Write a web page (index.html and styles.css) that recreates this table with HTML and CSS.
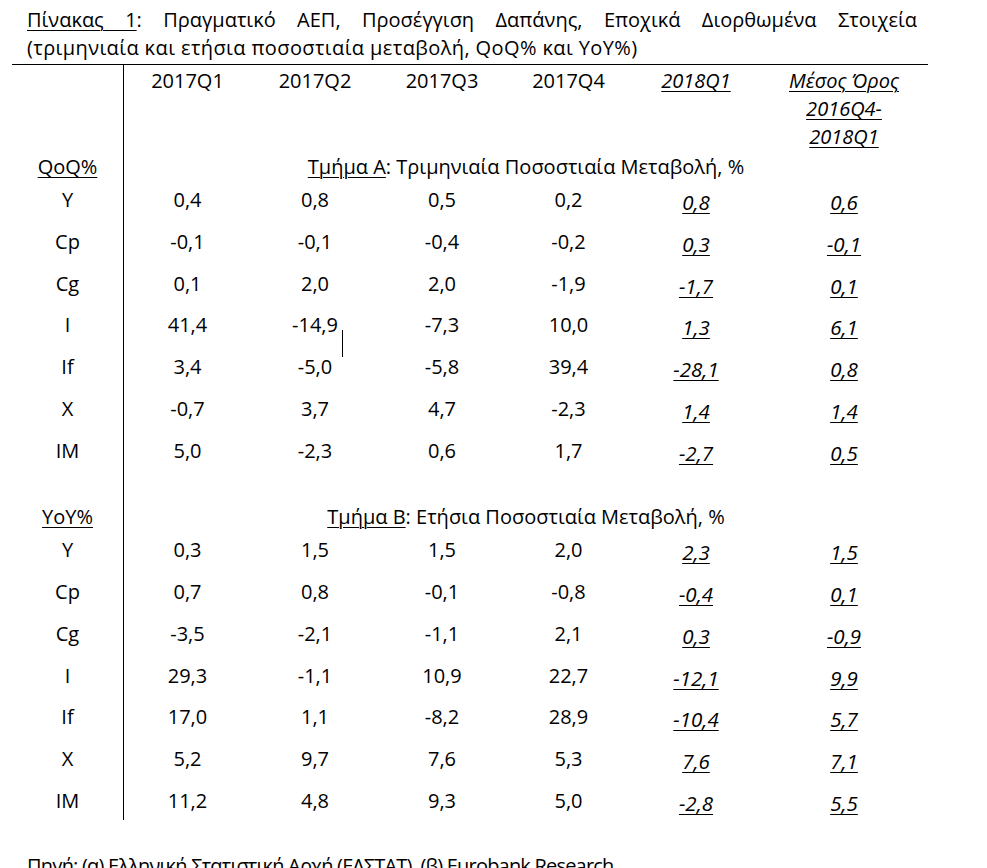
FILE: index.html
```html
<!DOCTYPE html>
<html lang="el">
<head>
<meta charset="utf-8">
<title>Πίνακας 1</title>
<link rel="stylesheet" href="styles.css">
</head>
<body>
<div class="page">
  <div class="title">
    <p class="title-line justify"><span class="u">Πίνακας 1</span>: Πραγματικό ΑΕΠ, Προσέγγιση Δαπάνης, Εποχικά Διορθωμένα Στοιχεία</p>
    <p class="title-line wide">(τριμηνιαία και ετήσια ποσοστιαία μεταβολή, QoQ% και YoY%)</p>
  </div>
  <div class="table">
    <div class="lab head"></div>
    <div class="head">2017Q1</div>
    <div class="head">2017Q2</div>
    <div class="head">2017Q3</div>
    <div class="head">2017Q4</div>
    <div class="head it"><span class="u">2018Q1</span></div>
    <div class="head it"><span class="u">Μέσος Όρος<br>2016Q4-<br>2018Q1</span></div>

    <div class="lab sec"><span class="u">QoQ%</span></div>
    <div class="sec span"><span class="u">Τμήμα Α</span>: Τριμηνιαία Ποσοστιαία Μεταβολή, %</div>

    <div class="lab row">Y</div><div class="row">0,4</div><div class="row">0,8</div><div class="row">0,5</div><div class="row">0,2</div><div class="row it"><span class="u">0,8</span></div><div class="row it"><span class="u">0,6</span></div>
    <div class="lab row">Cp</div><div class="row">-0,1</div><div class="row">-0,1</div><div class="row">-0,4</div><div class="row">-0,2</div><div class="row it"><span class="u">0,3</span></div><div class="row it"><span class="u">-0,1</span></div>
    <div class="lab row">Cg</div><div class="row">0,1</div><div class="row">2,0</div><div class="row">2,0</div><div class="row">-1,9</div><div class="row it"><span class="u">-1,7</span></div><div class="row it"><span class="u">0,1</span></div>
    <div class="lab row">I</div><div class="row">41,4</div><div class="row mark">-14,9<span class="stray"></span></div><div class="row">-7,3</div><div class="row">10,0</div><div class="row it"><span class="u">1,3</span></div><div class="row it"><span class="u">6,1</span></div>
    <div class="lab row">If</div><div class="row">3,4</div><div class="row">-5,0</div><div class="row">-5,8</div><div class="row">39,4</div><div class="row it"><span class="u">-28,1</span></div><div class="row it"><span class="u">0,8</span></div>
    <div class="lab row">X</div><div class="row">-0,7</div><div class="row">3,7</div><div class="row">4,7</div><div class="row">-2,3</div><div class="row it"><span class="u">1,4</span></div><div class="row it"><span class="u">1,4</span></div>
    <div class="lab row">IM</div><div class="row">5,0</div><div class="row">-2,3</div><div class="row">0,6</div><div class="row">1,7</div><div class="row it"><span class="u">-2,7</span></div><div class="row it"><span class="u">0,5</span></div>

    <div class="lab gap"></div><div class="gap span"></div>

    <div class="lab sec"><span class="u">YoY%</span></div>
    <div class="sec span"><span class="u">Τμήμα Β</span>: Ετήσια Ποσοστιαία Μεταβολή, %</div>

    <div class="lab row">Y</div><div class="row">0,3</div><div class="row">1,5</div><div class="row">1,5</div><div class="row">2,0</div><div class="row it"><span class="u">2,3</span></div><div class="row it"><span class="u">1,5</span></div>
    <div class="lab row">Cp</div><div class="row">0,7</div><div class="row">0,8</div><div class="row">-0,1</div><div class="row">-0,8</div><div class="row it"><span class="u">-0,4</span></div><div class="row it"><span class="u">0,1</span></div>
    <div class="lab row">Cg</div><div class="row">-3,5</div><div class="row">-2,1</div><div class="row">-1,1</div><div class="row">2,1</div><div class="row it"><span class="u">0,3</span></div><div class="row it"><span class="u">-0,9</span></div>
    <div class="lab row">I</div><div class="row">29,3</div><div class="row">-1,1</div><div class="row">10,9</div><div class="row">22,7</div><div class="row it"><span class="u">-12,1</span></div><div class="row it"><span class="u">9,9</span></div>
    <div class="lab row">If</div><div class="row">17,0</div><div class="row">1,1</div><div class="row">-8,2</div><div class="row">28,9</div><div class="row it"><span class="u">-10,4</span></div><div class="row it"><span class="u">5,7</span></div>
    <div class="lab row">X</div><div class="row">5,2</div><div class="row">9,7</div><div class="row">7,6</div><div class="row">5,3</div><div class="row it"><span class="u">7,6</span></div><div class="row it"><span class="u">7,1</span></div>
    <div class="lab row last">IM</div><div class="row">11,2</div><div class="row">4,8</div><div class="row">9,3</div><div class="row">5,0</div><div class="row it"><span class="u">-2,8</span></div><div class="row it"><span class="u">5,5</span></div>
  </div>
  <p class="note">Πηγή: (α) Ελληνική Στατιστική Αρχή (ΕΛΣΤΑΤ), (β) Eurobank Research</p>
</div>
</body>
</html>
```

FILE: styles.css
```css
html, body {
  margin: 0;
  padding: 0;
  background: #ffffff;
}
body {
  font-family: "Open Sans", "Noto Sans", "DejaVu Sans", sans-serif;
  font-size: 20px;
  color: #000000;
  overflow: hidden;
}
.page {
  padding: 6px 0 0 12px;
  width: 916px;
}
.title {
  padding-left: 15px;
  width: 890px;
}
.title-line {
  margin: 0;
  line-height: 28px;
  white-space: nowrap;
}
.title-line.justify {
  white-space: normal;
  text-align: justify;
  text-align-last: justify;
}
.title-line.wide {
  letter-spacing: 0.4px;
}
.u {
  text-decoration: underline;
  text-decoration-thickness: 1px;
  text-underline-offset: 3px;
}
.table {
  margin-top: 2px;
  border-top: 1px solid #000;
  display: grid;
  grid-template-columns: 112px 127px 128px 126px 127px 128px 168px;
  text-align: center;
  line-height: 28px;
}
.lab {
  border-right: 1px solid #000;
}
.head {
  height: 86px;
  padding-top: 2px;
}
.sec {
  height: 28px;
}
.span {
  grid-column: 2 / 8;
}
.row {
  height: 36.75px;
  padding-top: 5px;
}
.row.last {
  height: 33px;
}
.gap {
  height: 30px;
}
.it {
  font-style: italic;
}
.row.it {
  padding-top: 7px;
  height: 34.75px;
  font-size: 20.5px;
}
.mark {
  position: relative;
}
.stray {
  position: absolute;
  left: 91px;
  top: 24px;
  width: 1px;
  height: 27px;
  background: #000;
}
.note {
  margin: 28px 0 0 15px;
  line-height: 28px;
  letter-spacing: -0.8px;
  white-space: nowrap;
}
```
